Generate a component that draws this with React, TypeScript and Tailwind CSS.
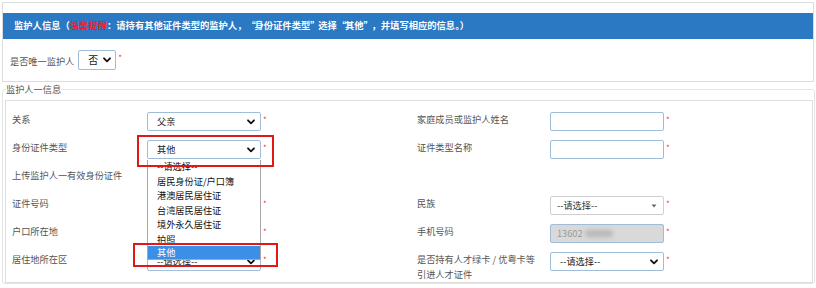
import React from "react";

const Chevron = () => (
  <svg width="8" height="6" viewBox="0 0 8 6" className="shrink-0">
    <path d="M1 1.3 L4 4.3 L7 1.3" stroke="#111" strokeWidth="1.8" fill="none" strokeLinecap="round" strokeLinejoin="round" />
  </svg>
);

const Star = () => <span className="ml-[2px] mt-[4px] self-start text-[8px] leading-[8px] text-[#ff3030]">*</span>;

const OQ = () => <span className="inline-block w-[8px] text-right">“</span>;
const CQ = () => <span className="inline-block w-[8px] text-left">”</span>;

function Select({ value, caret = false }: { value: string; caret?: boolean }) {
  return (
    <div
      className={
        caret
          ? "flex h-[19px] w-[114px] items-center justify-between rounded-[2px] border border-[#cfcfcf] bg-white pl-[6px] pr-[6px] text-[9.2px] text-[#333]"
          : "flex h-[19px] w-[114px] items-center justify-between rounded-[2px] border border-[#9fbcd8] bg-white pl-[9px] pr-[5px] text-[9.2px] text-[#222]"
      }
    >
      <span className="leading-none">{value}</span>
      {caret ? (
        <svg width="6" height="4" viewBox="0 0 6 4"><path d="M0.5 0.5 L5.5 0.5 L3 3.5 Z" fill="#666" /></svg>
      ) : (
        <Chevron />
      )}
    </div>
  );
}

const Input = ({ disabled = false, children }: { disabled?: boolean; children?: React.ReactNode }) => (
  <div
    className={
      "flex h-[19px] w-[114px] items-center rounded-[2px] border border-[#9fbcd8] pl-[6px] text-[9.2px] text-[#9a9a9a] " +
      (disabled ? "bg-[#d9d9d9]" : "bg-white")
    }
  >
    {children}
  </div>
);

function Row({ label, children, h = "h-[28px]" }: { label: React.ReactNode; children?: React.ReactNode; h?: string }) {
  return (
    <div className={"flex items-start pl-[6px] " + h}>
      <div className="w-[135px] shrink-0 text-[9.2px] leading-[15px] text-[#555]">{label}</div>
      {children}
    </div>
  );
}

function RowR({ label, children, h = "h-[28px]" }: { label: React.ReactNode; children?: React.ReactNode; h?: string }) {
  return (
    <div className={"flex items-start pl-[6px] " + h}>
      <div className="w-[133px] shrink-0 text-[9.2px] leading-[15px] text-[#555]">{label}</div>
      {children}
    </div>
  );
}

export default function App() {
  return (
    <div lang="zh-CN" className="h-[288px] w-[816px] overflow-hidden bg-white font-['Noto_Sans_CJK_SC','Noto_Sans',sans-serif] text-[#555]">
      {/* top panel */}
      <div className="mx-[2px] mt-[2px] h-[80px] border border-[#dcdcdc] pt-[10px]">
        <div className="flex h-[26px] items-center bg-[#2b78c3] pl-[11px] text-[9.3px] font-bold text-white">
          <span>监护人信息（</span>
          <span className="text-[#ff1a1a]">温馨提醒</span>
          <span>
            ：请持有其他证件类型的监护人，<OQ />身份证件类型<CQ />选择<OQ />其他<CQ />，并填写相应的信息。）
          </span>
        </div>
        <div className="mt-[11px] flex h-[20px] items-center pl-[7px]">
          <span className="mt-[2px] text-[9.2px] leading-[15px] text-[#555]">是否唯一监护人</span>
          <div className="ml-[4px] flex h-[20px] w-[38px] items-center justify-between rounded-[2px] border border-[#9fbcd8] pl-[9px] pr-[4px] text-[10px] text-[#222]">
            <span className="leading-none">否</span>
            <Chevron />
          </div>
          <span className="ml-[2px] mt-[4px] self-start text-[8px] leading-[8px] text-[#ff3030]">*</span>
        </div>
      </div>

      {/* fieldset */}
      <fieldset className="ml-[2px] mr-[1px] mt-[1px] rounded-[3px] border border-[#e4e4e4] pl-[2px] pr-[1px]">
        <legend className="ml-[1px] px-0 text-[9.2px] leading-[12px] text-[#555]">监护人一信息</legend>
        <div className="mt-[5px] grid grid-cols-[405px_1fr] border border-[#dedede] pt-[11px]">
          {/* left column */}
          <div>
            <Row label="关系">
              <Select value="父亲" />
              <Star />
            </Row>
            <Row label="身份证件类型">
              <div className="relative">
                <Select value="其他" />
                {/* open dropdown list */}
                <div className="absolute left-0 top-[20px] z-10 h-[100px] w-[114px] overflow-hidden border border-t-0 border-[#a8a8a8] bg-white text-[9.2px] text-[#111]">
                  <div className="-mt-[1px] flex flex-col leading-[14.5px]">
                    <span className="pl-[9px]">--请选择--</span>
                    <span className="pl-[9px]">居民身份证/户口簿</span>
                    <span className="pl-[9px]">港澳居民居住证</span>
                    <span className="pl-[9px]">台湾居民居住证</span>
                    <span className="pl-[9px]">境外永久居住证</span>
                    <span className="pl-[9px]">拍照</span>
                  </div>
                  <div className="absolute bottom-0 left-0 flex h-[13px] w-full items-center bg-[#3b8fe6] pl-[9px] text-white">
                    其他
                  </div>
                </div>
                {/* red annotation boxes */}
                <div className="pointer-events-none absolute left-[-10px] top-[-5px] z-20 h-[32px] w-[137px] border-2 border-[#e01818]" />
                <div className="pointer-events-none absolute left-[-14px] top-[103px] z-20 h-[24px] w-[145px] border-2 border-[#e01818]" />
              </div>
              <Star />
            </Row>
            <Row label="上传监护人一有效身份证件" />
            <Row label="证件号码">
              <Input />
              <Star />
            </Row>
            <Row label="户口所在地">
              <Input />
              <Star />
            </Row>
            <Row label="居住地所在区" h="h-[30px]">
              <Select value="--请选择--" />
              <Star />
            </Row>
          </div>

          {/* right column */}
          <div>
            <RowR label="家庭成员或监护人姓名">
              <Input />
              <Star />
            </RowR>
            <RowR label="证件类型名称">
              <Input />
              <Star />
            </RowR>
            <RowR label="" />
            <RowR label="民族">
              <Select value="--请选择--" caret />
              <Star />
            </RowR>
            <RowR label="手机号码">
              <Input disabled>
                <span className="leading-none">13602</span>
                <span className="ml-[2px] h-[7px] w-[28px] rounded-full bg-[#b8b8b8] blur-[2px]" />
              </Input>
              <Star />
            </RowR>
            <RowR
              label={
                <>
                  是否持有人才绿卡 / 优粤卡等
                  <br />
                  引进人才证件
                </>
              }
              h="h-[30px]"
            >
              <Select value="--请选择--" />
              <Star />
            </RowR>
          </div>
        </div>
      </fieldset>
    </div>
  );
}
